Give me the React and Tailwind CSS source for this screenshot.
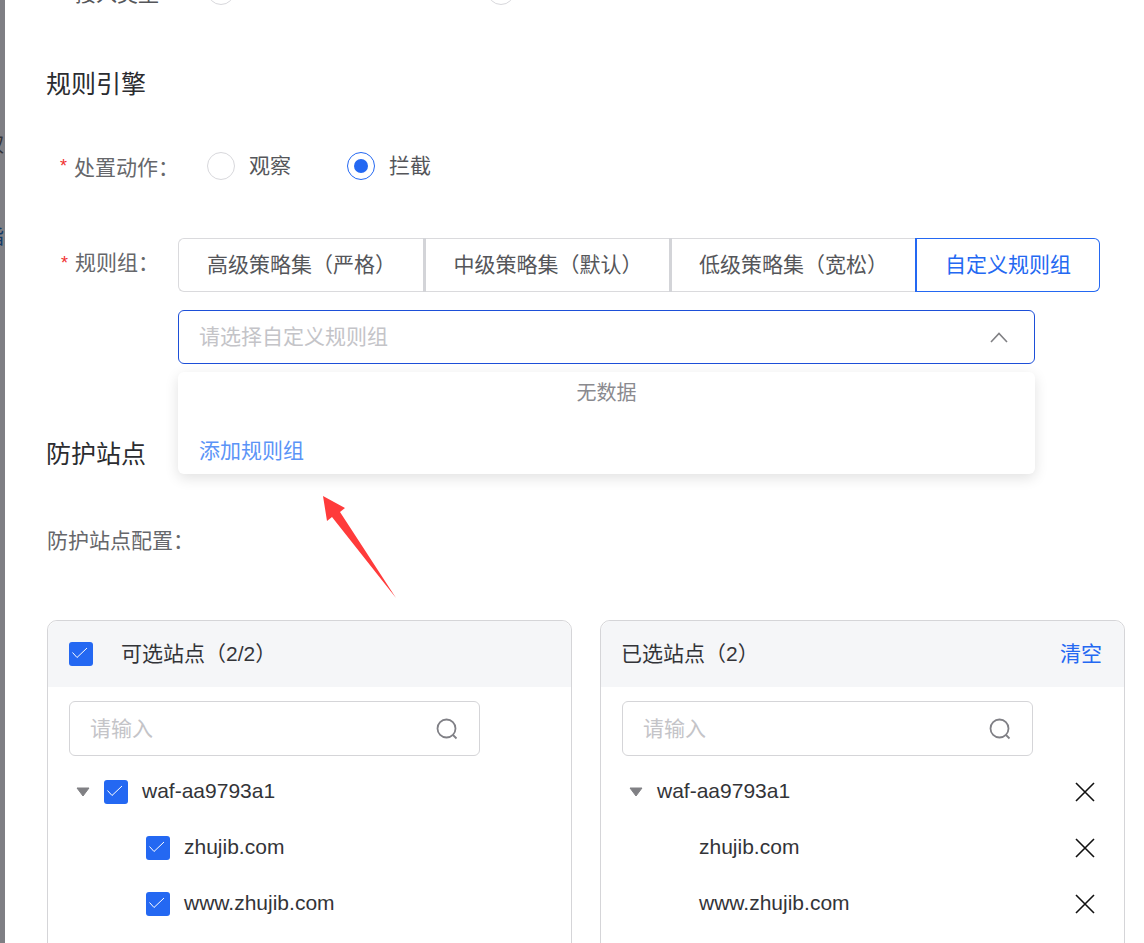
const font = "font-['Liberation_Sans','Noto_Sans_CJK_SC',sans-serif]";

function Check() {
  return (
    <span className="block h-6 w-6 shrink-0 rounded-[3px] bg-[#2468f2]">
      <svg width="24" height="24" viewBox="0 0 24 24" fill="none" stroke="#fff" strokeWidth="1">
        <path d="M3.5 10.5L8 15.5 18 6" />
      </svg>
    </span>
  );
}

function Radio({ checked, label }) {
  return (
    <div className="flex items-center gap-[14px]">
      <span
        className={
          checked
            ? "flex h-7 w-7 items-center justify-center rounded-full border border-[#2468f2] bg-white"
            : "flex h-7 w-7 items-center justify-center rounded-full border border-[#d8d8dc] bg-white"
        }
      >
        {checked && <span className="h-[14px] w-[14px] rounded-full bg-[#2468f2]" />}
      </span>
      {label && <span className="text-[21px] leading-7 text-[#55565a]">{label}</span>}
    </div>
  );
}

function SearchBox() {
  return (
    <div className="flex h-[55px] w-[411px] items-center justify-between rounded-[6px] border border-[#d5d5d8] pl-[20px] pr-[21px]">
      <span className="text-[21px] text-[#c4c4c8]">请输入</span>
      <svg width="22" height="22" viewBox="0 0 22 22" fill="none" stroke="#808086" strokeWidth="1.8">
        <circle cx="10.5" cy="10.5" r="9" />
        <path d="M17 17l3.5 3.5" />
      </svg>
    </div>
  );
}

function Caret() {
  return (
    <svg width="14" height="10" viewBox="0 0 14 10" className="shrink-0">
      <path d="M1 1h12L7 9z" fill="#808084" stroke="#808084" strokeLinejoin="round" />
    </svg>
  );
}

function Remove() {
  return (
    <svg width="20" height="20" viewBox="0 0 20 20" fill="none" stroke="#111" strokeWidth="1.6" className="shrink-0">
      <path d="M1 1l18 18M19 1L1 19" />
    </svg>
  );
}

function SegButton({ children, className }) {
  return (
    <div className={"relative flex h-[54px] items-center justify-center border-y text-[21px] " + className}>
      {children}
    </div>
  );
}

export default function App() {
  return (
    <div lang="zh-CN" className={"relative flex h-[943px] w-[1144px] overflow-hidden bg-white " + font}>
      <div className="flex w-[5px] shrink-0 flex-col overflow-hidden bg-[#7f7f84] text-[20px] leading-7 whitespace-nowrap">
        <span className="ml-[-16px] mt-[131px] text-[#333338]">权</span>
        <span className="ml-[-16px] mt-[64px] text-[#123a66]">指</span>
      </div>

      <div className="flex-1 pl-[42px]">
        {/* row cut off by the top edge */}
        <div className="mt-[-23px] flex h-7 items-center pl-[28px]">
          <span className="w-[132px] pt-[6px] text-[21px] text-[#55565a]">接入类型</span>
          <div className="w-[280px]">
            <Radio />
          </div>
          <Radio />
        </div>

        <h2 className="mt-[62px] ml-[-1px] h-[34px] text-[25px] leading-[34px] text-[#2b2c30]">规则引擎</h2>

        <div className="mt-[51px] flex h-7 items-center pl-[13px]">
          <span className="w-[14px] text-[18px] text-[#f03030]">*</span>
          <span className="mt-[4px] w-[133px] text-[21px] text-[#66676b]">处置动作：</span>
          <Radio label="观察" />
          <div className="ml-14">
            <Radio checked label="拦截" />
          </div>
        </div>

        <div className="mt-[58px] flex items-start pl-[14px]">
          <span className="w-[14px] text-[18px] leading-[50px] text-[#f03030]">*</span>
          <span className="w-[103px] text-[21px] leading-[50px] text-[#66676b]">规则组：</span>
          <div>
            <div className="flex w-[922px] text-[#55565a]">
              <SegButton className="w-[248px] rounded-l-[6px] border-l border-[#dadadd] pr-[2px]">高级策略集（严格）</SegButton>
              <SegButton className="w-[246px] border-[#dadadd] pr-[2px] before:absolute before:-inset-y-px before:left-[-3px] before:w-[3px] before:bg-[#d3d4d8]">中级策略集（默认）</SegButton>
              <SegButton className="w-[245px] border-[#dadadd] pr-[2px] before:absolute before:-inset-y-px before:left-[-3px] before:w-[3px] before:bg-[#d3d4d8]">低级策略集（宽松）</SegButton>
              <SegButton className="w-[183px] rounded-r-[6px] border-r border-[#2468f2] text-[#2468f2] before:absolute before:-inset-y-px before:left-[-2px] before:w-[2px] before:bg-[#2468f2]">自定义规则组</SegButton>
            </div>

            <div className="relative mt-[18px] w-[857px]">
              <div className="flex h-[54px] items-center justify-between rounded-[6px] border border-[#1d4fd8] pl-[20px] pr-[26px]">
                <span className="text-[21px] text-[#c4c4c8]">请选择自定义规则组</span>
                <svg width="18" height="11" viewBox="0 0 18 11" fill="none" stroke="#808084" strokeWidth="1.6">
                  <path d="M1 10l8-8.5 8 8.5" />
                </svg>
              </div>
              <div className="absolute left-0 top-[62px] z-10 h-[102px] w-[857px] rounded-[6px] bg-white shadow-[0_4px_14px_rgba(0,0,0,0.12)]">
                <div className="pt-[7px] text-center text-[20px] leading-7 text-[#8a8a8f]">无数据</div>
                <div className="mt-[30px] pl-[21px] text-[21px] leading-7 text-[#5b94f7]">添加规则组</div>
              </div>
            </div>
          </div>
        </div>

        <h2 className="mt-[73px] ml-[-1px] h-[34px] text-[25px] leading-[34px] text-[#2b2c30]">防护站点</h2>

        <div className="mt-[56px] h-7 text-[21px] leading-7 text-[#66676b]">防护站点配置：</div>

        <div className="mt-[65px] flex gap-[28px]">
          <div className="h-[400px] w-[525px] shrink-0 rounded-[10px] border border-[#d5d5d8]">
            <div className="flex h-[66px] items-center gap-[28px] rounded-t-[10px] bg-[#f5f6f8] pl-[21px]">
              <Check />
              <span className="text-[21px] text-[#333438]">可选站点（2/2）</span>
            </div>
            <div className="pl-[21px] pt-[14px]">
              <SearchBox />
            </div>
            <div className="mt-[8px] text-[21px] text-[#333438]">
              <div className="flex h-[56px] items-center pl-[28px]">
                <Caret />
                <span className="ml-[14px]"><Check /></span>
                <span className="ml-[14px] pb-[2px]">waf-aa9793a1</span>
              </div>
              <div className="flex h-[56px] items-center gap-[14px] pl-[98px]">
                <Check />
                <span className="pb-[2px]">zhujib.com</span>
              </div>
              <div className="flex h-[56px] items-center gap-[14px] pl-[98px]">
                <Check />
                <span className="pb-[2px]">www.zhujib.com</span>
              </div>
            </div>
          </div>

          <div className="h-[400px] w-[525px] shrink-0 rounded-[10px] border border-[#d5d5d8]">
            <div className="flex h-[66px] items-center justify-between rounded-t-[10px] bg-[#f5f6f8] pl-[20px] pr-[22px]">
              <span className="text-[21px] text-[#333438]">已选站点（2）</span>
              <span className="text-[21px] text-[#2468f2]">清空</span>
            </div>
            <div className="pl-[21px] pt-[14px]">
              <SearchBox />
            </div>
            <div className="mt-[8px] text-[21px] text-[#333438]">
              <div className="flex h-[56px] items-center pl-[28px] pr-[29px]">
                <Caret />
                <span className="ml-[14px] flex-1 pb-[2px]">waf-aa9793a1</span>
                <Remove />
              </div>
              <div className="flex h-[56px] items-center justify-between pl-[98px] pr-[29px]">
                <span className="pb-[2px]">zhujib.com</span>
                <Remove />
              </div>
              <div className="flex h-[56px] items-center justify-between pl-[98px] pr-[29px]">
                <span className="pb-[2px]">www.zhujib.com</span>
                <Remove />
              </div>
            </div>
          </div>
        </div>
      </div>

      {/* annotation arrow drawn on top of the screenshot */}
      <svg width="80" height="110" viewBox="0 0 80 110" className="absolute left-[320px] top-[492px] z-20">
        <path d="M3 4L25 16 20 20 76 106 12 25 7 29z" fill="#ff3b3b" />
      </svg>
    </div>
  );
}
